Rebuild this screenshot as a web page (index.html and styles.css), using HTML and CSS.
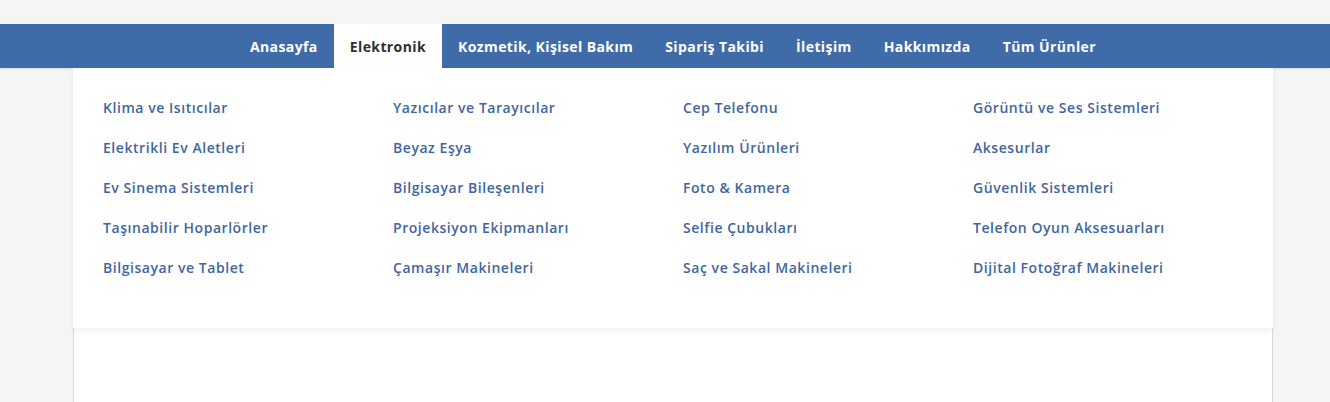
FILE: index.html
```
<!DOCTYPE html>
<html lang="tr">
<head>
<meta charset="utf-8">
<title>Menü</title>
<link rel="stylesheet" href="styles.css">
</head>
<body>
<div class="top-space"></div>
<nav class="navbar">
  <ul class="nav-list">
    <li class="nav-item"><a href="#">Anasayfa</a></li>
    <li class="nav-item active"><a href="#">Elektronik</a></li>
    <li class="nav-item"><a href="#">Kozmetik, Kişisel Bakım</a></li>
    <li class="nav-item"><a href="#">Sipariş Takibi</a></li>
    <li class="nav-item"><a href="#">İletişim</a></li>
    <li class="nav-item"><a href="#">Hakkımızda</a></li>
    <li class="nav-item"><a href="#">Tüm Ürünler</a></li>
  </ul>
</nav>
<div class="container">
  <div class="content-box"></div>
  <div class="dropdown">
    <div class="dropdown-grid">
      <a href="#">Klima ve Isıtıcılar</a>
      <a href="#">Yazıcılar ve Tarayıcılar</a>
      <a href="#">Cep Telefonu</a>
      <a href="#">Görüntü ve Ses Sistemleri</a>
      <a href="#">Elektrikli Ev Aletleri</a>
      <a href="#">Beyaz Eşya</a>
      <a href="#">Yazılım Ürünleri</a>
      <a href="#">Aksesurlar</a>
      <a href="#">Ev Sinema Sistemleri</a>
      <a href="#">Bilgisayar Bileşenleri</a>
      <a href="#">Foto &amp; Kamera</a>
      <a href="#">Güvenlik Sistemleri</a>
      <a href="#">Taşınabilir Hoparlörler</a>
      <a href="#">Projeksiyon Ekipmanları</a>
      <a href="#">Selfie Çubukları</a>
      <a href="#">Telefon Oyun Aksesuarları</a>
      <a href="#">Bilgisayar ve Tablet</a>
      <a href="#">Çamaşır Makineleri</a>
      <a href="#">Saç ve Sakal Makineleri</a>
      <a href="#">Dijital Fotoğraf Makineleri</a>
    </div>
  </div>
</div>
</body>
</html>
```
FILE: styles.css
```
* { box-sizing: border-box; }
html, body {
  margin: 0;
  padding: 0;
  background: #f5f5f5;
  font-family: "Open Sans", "Liberation Sans", sans-serif;
  overflow: hidden;
}
a { text-decoration: none; }
.top-space { height: 24px; }
.navbar {
  height: 44px;
  background: #3f6ba9;
  box-shadow: 0 1px 2px rgba(0,0,0,0.12);
  position: relative;
  z-index: 2;
}
.nav-list {
  list-style: none;
  margin: 0 0 0 73px;
  padding: 0;
  width: 1200px;
  height: 44px;
  display: flex;
  justify-content: center;
}
.nav-item a {
  display: flex;
  align-items: center;
  height: 44px;
  padding: 0 16px;
  color: #fff;
  font-size: 14px;
  font-weight: 700;
  letter-spacing: 0.4px;
}
.nav-item.active a {
  background: #fff;
  color: #2f2f2f;
}
.container {
  width: 1200px;
  margin: 0 0 0 73px;
  position: relative;
}
.content-box {
  height: 400px;
  background: #fff;
  border-left: 1px solid #d9d9d9;
  border-right: 1px solid #d9d9d9;
}
.dropdown {
  position: absolute;
  top: 0;
  left: 0;
  width: 1200px;
  height: 260px;
  background: #fff;
  box-shadow: 0 3px 6px rgba(0,0,0,0.06);
  padding: 29px 0 0 30px;
  z-index: 3;
}
.dropdown-grid {
  display: grid;
  grid-template-columns: repeat(4, 290px);
  grid-auto-rows: 40px;
}
.dropdown-grid a {
  display: flex;
  align-items: center;
  height: 20px;
  color: #3f66a0;
  font-size: 14px;
  font-weight: 600;
  letter-spacing: 0.55px;
}
```
